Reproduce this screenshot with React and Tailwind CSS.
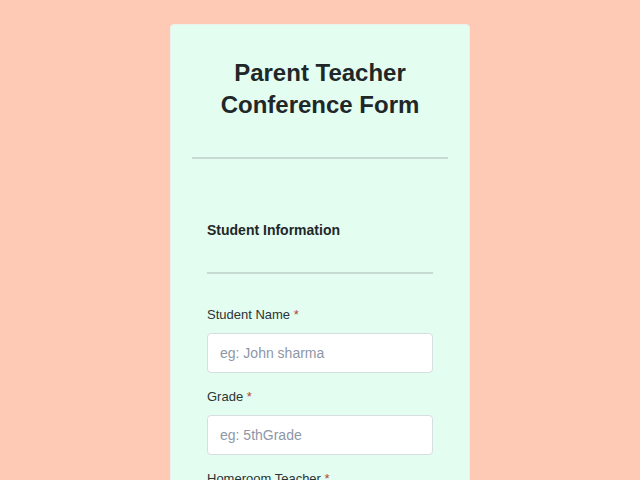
export default function App() {
  const fields = [
    { label: 'Student Name', placeholder: 'eg: John sharma' },
    { label: 'Grade', placeholder: 'eg: 5thGrade' },
    { label: 'Homeroom Teacher', placeholder: 'eg: Mrs. Smith' },
  ];

  return (
    <div className="min-h-screen bg-[#ffcab5] pt-[24px] font-['Liberation_Sans',Arial,sans-serif] text-[#1f2729]">
      <div className="mx-auto w-[300px] rounded-[4px] border border-[#ebf2ee] bg-[#e3fdf0] px-[21px] pb-10 pt-[32px]">
        <h1 className="text-center text-[24px] font-bold leading-[32px]">
          Parent Teacher
          <br />
          Conference Form
        </h1>
        <div className="mt-[36px] h-[2px] bg-[#c6dcd2]" />

        <div className="px-[15px] pt-[61px]">
          <h2 className="text-[14px] font-bold leading-[20px]">Student Information</h2>
          <div className="mt-[32px] h-[2px] bg-[#c6dcd2]" />

          <div className="mt-[32px] flex flex-col gap-[15px]">
            {fields.map((f) => (
              <div key={f.label}>
                <label className="block text-[13px] leading-[18px] text-[#2b3436]">
                  {f.label} <span className="text-[#b0473a]">*</span>
                </label>
                <input
                  type="text"
                  placeholder={f.placeholder}
                  className="mt-[9px] block h-[40px] w-full rounded-[4px] border border-[#d6dee0] bg-white px-[12px] text-[14px] outline-none placeholder:text-[#8e97a7]"
                />
              </div>
            ))}
          </div>
        </div>
      </div>
    </div>
  );
}
